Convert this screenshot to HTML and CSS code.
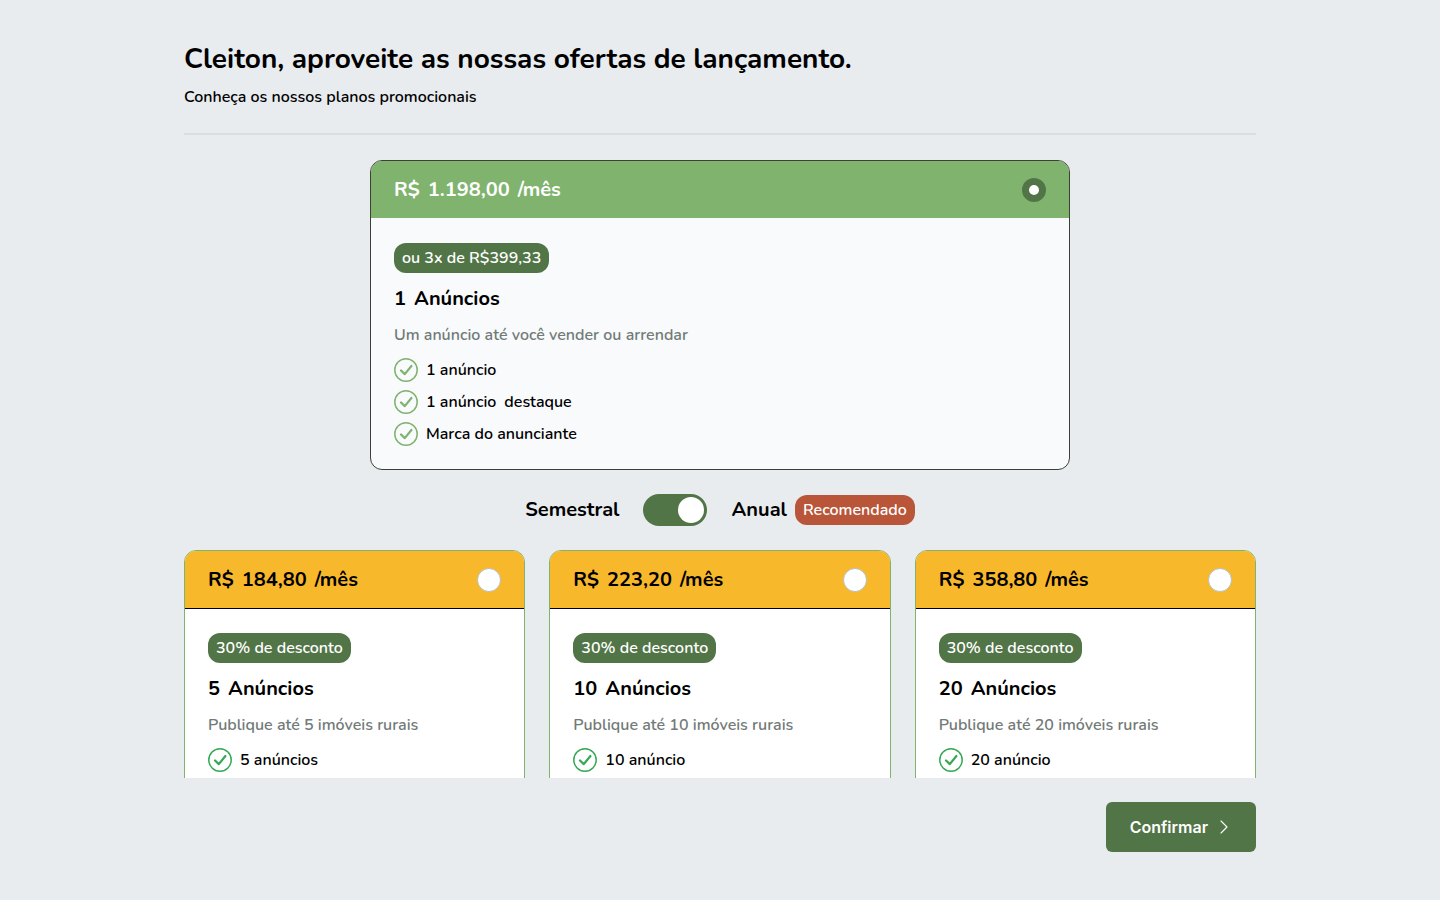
FILE: index.html
```
<!DOCTYPE html>
<html lang="pt-BR">
<head>
    <meta charset="UTF-8">
    <meta name="viewport" content="width=device-width, initial-scale=1.0">
    <title>Planos promocionais</title>
    <link rel="stylesheet" href="styles.css">
</head>
<body>
    <!-- Ícone usado nas listas de benefícios -->
    <svg class="sprite" aria-hidden="true">
        <symbol id="check" viewBox="0 0 24 24">
            <circle cx="12" cy="12" r="11.2" fill="none" stroke="currentColor" stroke-width="1.5"/>
            <path d="M7 12.5l3.8 3.6L17.4 8" fill="none" stroke="currentColor" stroke-width="2.2" stroke-linecap="round" stroke-linejoin="round"/>
        </symbol>
    </svg>

    <form class="page">
        <header class="page-header">
            <h1>Cleiton, aproveite as nossas ofertas de lançamento.</h1>
            <p>Conheça os nossos planos promocionais</p>
        </header>

        <main class="plans">
            <section class="card card-single">
                <label class="card-head">
                    <span class="price"><span>R$</span><span>1.198,00</span><span>/mês</span></span>
                    <input type="radio" name="plan" value="1" checked>
                </label>
                <div class="card-body">
                    <span class="badge">ou 3x de R$399,33</span>
                    <h2><span>1</span><span>Anúncios</span></h2>
                    <p class="description">Um anúncio até você vender ou arrendar</p>
                    <ul>
                        <li><svg><use href="#check"/></svg><span>1 anúncio</span></li>
                        <li><svg><use href="#check"/></svg><span>1 anúncio</span><span>destaque</span></li>
                        <li><svg><use href="#check"/></svg><span>Marca do anunciante</span></li>
                    </ul>
                </div>
            </section>

            <div class="period">
                <label for="period">Semestral</label>
                <input type="checkbox" id="period" class="switch" checked>
                <div class="period-annual">
                    <label for="period">Anual</label>
                    <span class="badge badge-red">Recomendado</span>
                </div>
            </div>

            <div class="card-list">
                <section class="card">
                    <label class="card-head">
                        <span class="price"><span>R$</span><span>184,80</span><span>/mês</span></span>
                        <input type="radio" name="plan" value="5">
                    </label>
                    <div class="card-body">
                        <span class="badge">30% de desconto</span>
                        <h2><span>5</span><span>Anúncios</span></h2>
                        <p class="description">Publique até 5 imóveis rurais</p>
                        <ul>
                            <li><svg><use href="#check"/></svg><span>5 anúncios</span></li>
                        </ul>
                    </div>
                </section>

                <section class="card">
                    <label class="card-head">
                        <span class="price"><span>R$</span><span>223,20</span><span>/mês</span></span>
                        <input type="radio" name="plan" value="10">
                    </label>
                    <div class="card-body">
                        <span class="badge">30% de desconto</span>
                        <h2><span>10</span><span>Anúncios</span></h2>
                        <p class="description">Publique até 10 imóveis rurais</p>
                        <ul>
                            <li><svg><use href="#check"/></svg><span>10 anúncio</span></li>
                        </ul>
                    </div>
                </section>

                <section class="card">
                    <label class="card-head">
                        <span class="price"><span>R$</span><span>358,80</span><span>/mês</span></span>
                        <input type="radio" name="plan" value="20">
                    </label>
                    <div class="card-body">
                        <span class="badge">30% de desconto</span>
                        <h2><span>20</span><span>Anúncios</span></h2>
                        <p class="description">Publique até 20 imóveis rurais</p>
                        <ul>
                            <li><svg><use href="#check"/></svg><span>20 anúncio</span></li>
                        </ul>
                    </div>
                </section>
            </div>
        </main>

        <footer class="page-footer">
            <button type="button">
                Confirmar
                <svg viewBox="0 0 16 16" aria-hidden="true">
                    <path d="M5 2l6 6-6 6" fill="none" stroke="currentColor" stroke-width="1.1" stroke-linecap="round" stroke-linejoin="round"/>
                </svg>
            </button>
        </footer>
    </form>
</body>
</html>
```
FILE: styles.css
```
* {
    margin: 0;
    padding: 0;
    box-sizing: border-box;
}

body {
    font-family: Nunito, "Open Sans", sans-serif;
    font-size: 16px;
    font-weight: 600;
    line-height: 24px;
    background-color: #e8ecef;
    color: #000;
}

.sprite {
    display: none;
}

.page {
    display: flex;
    flex-direction: column;
    height: 100vh;
    max-width: 1120px;
    margin: 0 auto;
    padding: 40px 24px 48px;
}

.page-header {
    padding-bottom: 24px;
    border-bottom: 2px solid #d9dfdd;
}

h1 {
    font-size: 28px;
    font-weight: 700;
    line-height: 39px;
    margin-bottom: 6px;
}

/* Área rolável com os planos */
.plans {
    flex: 1;
    min-height: 0;
    overflow-y: auto;
    scrollbar-width: none;
    padding-top: 25px;
}

.card {
    background-color: #fff;
    border: 1px solid #80b36e;
    border-radius: 12px;
    overflow: hidden;
}

.card-head {
    display: flex;
    justify-content: space-between;
    align-items: center;
    padding: 16px 23px;
    background-color: #f8b82c;
    border-bottom: 1px solid #000;
    cursor: pointer;
}

.price {
    display: flex;
    gap: 8px;
    font-size: 20px;
    font-weight: 700;
    line-height: 25px;
}

.card-head input {
    appearance: none;
    width: 24px;
    height: 24px;
    border: 1px solid #b5bfbb;
    border-radius: 50%;
    background-color: #fff;
    cursor: pointer;
}

.card-head input:checked {
    border: 7px solid #527547;
}

.card-body {
    display: flex;
    flex-direction: column;
    align-items: flex-start;
    gap: 12px;
    padding: 24px 23px 23px;
}

.card-single {
    max-width: 700px;
    margin: 0 auto;
    background-color: #f8fafc;
    border-color: #3c4035;
}

.card-single .card-head {
    background-color: #80b36e;
    border-bottom-color: #f8fafc;
    color: #fff;
}

.badge {
    padding: 3px 8px;
    border-radius: 12px;
    background-color: #527547;
    color: #fff;
}

.badge-red {
    background-color: #b95538;
}

h2 {
    display: flex;
    gap: 8px;
    font-size: 20px;
    font-weight: 700;
    line-height: 27px;
}

.description {
    line-height: 22px;
    color: #717a77;
}

ul {
    display: flex;
    flex-direction: column;
    gap: 8px;
    list-style: none;
}

li {
    display: flex;
    gap: 8px;
}

li svg {
    width: 24px;
    height: 24px;
    color: #34a853;
}

.card-single li svg {
    color: #80b36e;
}

/* Seleção do período */
.period {
    display: flex;
    justify-content: center;
    align-items: center;
    gap: 24px;
    margin: 24px 0;
    font-size: 20px;
    font-weight: 700;
}

.period-annual {
    display: flex;
    align-items: center;
    gap: 8px;
}

.period .badge {
    font-size: 16px;
    font-weight: 600;
}

.switch {
    appearance: none;
    display: flex;
    width: 64px;
    height: 32px;
    padding: 3px;
    border-radius: 16px;
    background-color: #b5bfbb;
    cursor: pointer;
}

.switch::before {
    content: "";
    width: 26px;
    height: 26px;
    border-radius: 50%;
    background-color: #fff;
}

.switch:checked {
    justify-content: flex-end;
    background-color: #527547;
}

.card-list {
    display: grid;
    grid-template-columns: repeat(3, 1fr);
    gap: 24px;
}

.page-footer {
    display: flex;
    justify-content: flex-end;
    padding-top: 24px;
}

button {
    display: flex;
    align-items: center;
    gap: 8px;
    padding: 13px 24px;
    border: none;
    border-radius: 6px;
    background-color: #527547;
    color: #fff;
    font-family: Inter, sans-serif;
    font-size: 16px;
    font-weight: 600;
    line-height: 24px;
    cursor: pointer;
}

button svg {
    width: 16px;
    height: 16px;
}

@media screen and (max-width: 900px) {
    .card-list {
        grid-template-columns: 1fr;
    }
}
```
